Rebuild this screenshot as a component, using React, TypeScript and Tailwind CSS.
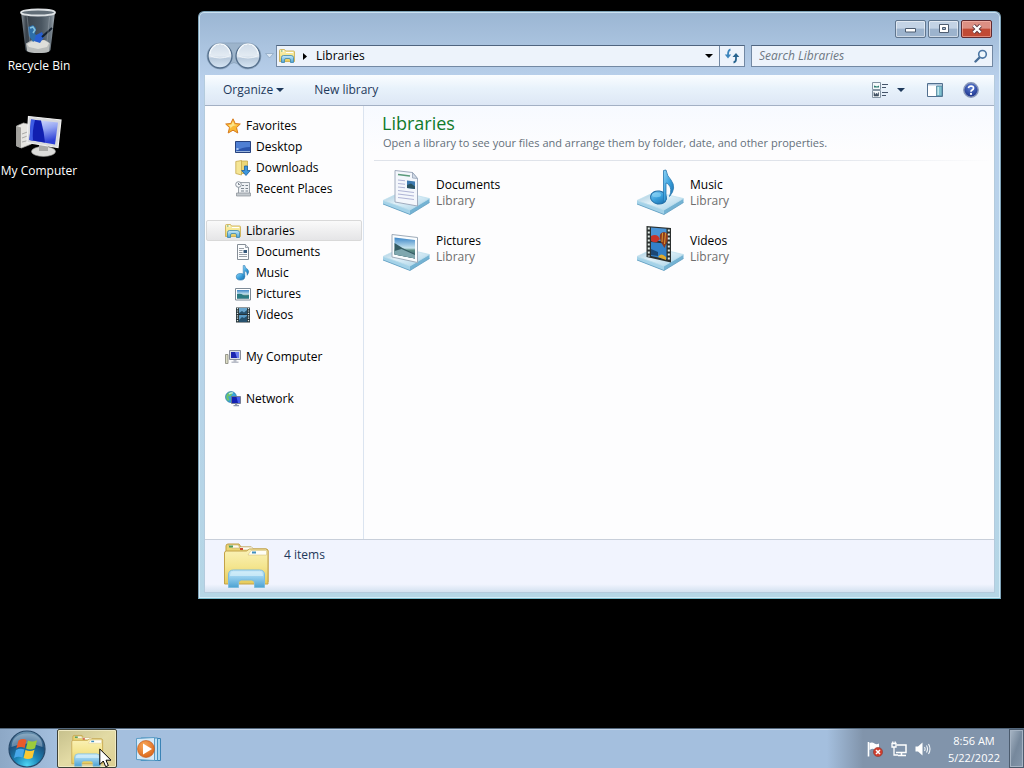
import type { ReactNode } from "react";

interface NavItem {
  label: string;
  icon: ReactNode;
}

interface NavGroup {
  title: string;
  icon: ReactNode;
  selected?: boolean;
  items: NavItem[];
}

// Gradients shared by the icons below
function IconDefs() {
  return (
    <svg className="absolute h-0 w-0" aria-hidden="true">
      <defs>
        <linearGradient id="folder" x1="0" y1="0" x2="0" y2="1">
          <stop offset="0" stopColor="#faf2b8" />
          <stop offset="0.5" stopColor="#f4e58f" />
          <stop offset="1" stopColor="#e6ca5c" />
        </linearGradient>
        <linearGradient id="stand" x1="0" y1="0" x2="0" y2="1">
          <stop offset="0" stopColor="#c9eafa" />
          <stop offset="0.45" stopColor="#8fcbec" />
          <stop offset="1" stopColor="#4da2d2" />
        </linearGradient>
        <linearGradient id="trayTop" x1="0" y1="0" x2="1" y2="1">
          <stop offset="0" stopColor="#9cc4d8" />
          <stop offset="0.45" stopColor="#e0f0f8" />
          <stop offset="1" stopColor="#a3d0e6" />
        </linearGradient>
        <linearGradient id="note" x1="0" y1="0" x2="1" y2="1">
          <stop offset="0" stopColor="#8ed4f7" />
          <stop offset="0.5" stopColor="#3aa0dc" />
          <stop offset="1" stopColor="#1568a8" />
        </linearGradient>
        <linearGradient id="sky" x1="0" y1="0" x2="0" y2="1">
          <stop offset="0" stopColor="#3c86c8" />
          <stop offset="0.5" stopColor="#c7e4ee" />
          <stop offset="0.6" stopColor="#5d8f86" />
          <stop offset="1" stopColor="#27556b" />
        </linearGradient>
        <linearGradient id="screen" x1="0" y1="0" x2="0.3" y2="1">
          <stop offset="0" stopColor="#e3e8ff" />
          <stop offset="0.5" stopColor="#93a4f2" />
          <stop offset="1" stopColor="#2c3fd6" />
        </linearGradient>
        <linearGradient id="bin" x1="0" y1="0" x2="1" y2="0">
          <stop offset="0" stopColor="#8b949b" />
          <stop offset="0.15" stopColor="#39424b" />
          <stop offset="0.6" stopColor="#4a5661" />
          <stop offset="0.88" stopColor="#6f7b85" />
          <stop offset="1" stopColor="#aab3ba" />
        </linearGradient>
        <linearGradient id="navBall" x1="0" y1="0" x2="0" y2="1">
          <stop offset="0" stopColor="#cfdbe8" />
          <stop offset="0.5" stopColor="#e3ebf3" />
          <stop offset="0.6" stopColor="#b9cadc" />
          <stop offset="1" stopColor="#d8e7f5" />
        </linearGradient>
        <radialGradient id="orb" cx="0.5" cy="0.95" r="0.95">
          <stop offset="0" stopColor="#4fd6f4" />
          <stop offset="0.35" stopColor="#1c86b8" />
          <stop offset="0.7" stopColor="#1c4f7c" />
          <stop offset="1" stopColor="#6f97b4" />
        </radialGradient>
        <radialGradient id="play" cx="0.4" cy="0.3" r="0.8">
          <stop offset="0" stopColor="#f8a95b" />
          <stop offset="1" stopColor="#d85f12" />
        </radialGradient>
        <radialGradient id="helpBall" cx="0.5" cy="0.3" r="0.7">
          <stop offset="0" stopColor="#5c80d6" />
          <stop offset="1" stopColor="#1a2f88" />
        </radialGradient>
      </defs>
    </svg>
  );
}

function LibrariesSmallIcon() {
  return (
    <svg className="h-4 w-4 shrink-0" viewBox="0 0 16 16">
      <path d="M.5 13.500V2.500q0-1 1-1h4l1 1.500h8q1 0 1 1v9.500z" fill="url(#folder)" stroke="#c9a94a" strokeWidth=".8" />
      <path d="M2 3h3M7 4.500h7" stroke="#fff" strokeWidth="1" />
      <path d="M2 3h1.500" stroke="#4f9c53" strokeWidth="1.200" />
      <path d="M2.500 14.500V9.500q0-2 2-2h7.500q2.500 0 2.500 2v5h-3v-2.500q0-1.500-1.500-1.500H7q-1.500 0-1.500 1.500v2.500z" fill="url(#stand)" stroke="#3c86ae" strokeWidth=".8" />
    </svg>
  );
}

function LibrariesLargeIcon({ className }: { className: string }) {
  return (
    <svg className={className} viewBox="0 0 48 48">
      <path d="M4 40V4q0-2 2-2h11l2 3h10l2 2h13q2 0 2 2v31z" fill="#ead472" stroke="#bf9f45" />
      <path d="M6 3h10l2 3h-8zM17 5h13l2 3H19z" fill="#fdfbef" stroke="#c5b077" strokeWidth=".6" />
      <path d="M7 4.500h4" stroke="#4d9d57" strokeWidth="2" />
      <path d="M18 7h3" stroke="#cf4630" strokeWidth="2" />
      <path d="M2.500 42V11q0-2 2-2h20l3-2h16q2.500 0 2.500 2v33z" fill="url(#folder)" stroke="#c3a248" />
      <path d="M29 8.500h15.500v4.500H26z" fill="#fffef5" stroke="#cdb976" strokeWidth=".5" />
      <path d="M30 10.500h4" stroke="#3f8fc0" strokeWidth="2" />
      <path d="M6.500 45.500V33q0-5 5-5h26q5 0 5 5v12.500h-10V41q0-3-3-3h-10q-3 0-3 3v4.500z" fill="url(#stand)" stroke="#7cbcdf" />
      <path d="M8 34q0-4.500 4-4.500h25q4 0 4 4.500z" fill="#d6effa" opacity=".7" />
    </svg>
  );
}

function StarIcon() {
  return (
    <svg className="h-4 w-4 shrink-0" viewBox="0 0 16 16">
      <path d="M8 .8 10.200 5.500 15.300 6 11.500 9.600 12.800 15 8 12.200 3.200 15 4.500 9.600.700 6 5.800 5.500z" fill="#f9b934" stroke="#d77a1d" strokeWidth="1" strokeLinejoin="round" />
      <path d="M8 3 9.300 6.500 12.500 7 8 8 4.500 11 5.500 9 3.300 7 6.500 6.500z" fill="#fde58a" />
    </svg>
  );
}

function DesktopSmallIcon() {
  return (
    <svg className="h-4 w-4 shrink-0" viewBox="0 0 16 16">
      <path d="M.5 2.500h15v11H.5z" fill="#2b55ad" stroke="#27427f" />
      <path d="M1 3h14v5Q7 8 1 12z" fill="#4f7fd3" />
      <path d="M1 12.500h14" stroke="#9ab5dc" />
      <path d="M1.500 9h2v2h-2z" fill="#a8c6f2" />
    </svg>
  );
}

function DownloadsIcon() {
  return (
    <svg className="h-4 w-4 shrink-0" viewBox="0 0 16 16">
      <path d="M6 1h6.500v12.500H6z" fill="#ecd676" stroke="#c7a94b" strokeWidth=".8" />
      <path d="M.8 1.500 6.500.5v14.500l-5.700-1.500z" fill="#f5e595" stroke="#c7a94b" strokeWidth=".8" />
      <path d="M9.500 6h3v4.500h2.800L11 15.500l-4.300-5h2.800z" fill="#3d96dc" stroke="#1b5fa3" strokeWidth=".8" />
    </svg>
  );
}

function RecentIcon() {
  return (
    <svg className="h-4 w-4 shrink-0" viewBox="0 0 16 16">
      <path d="M3.500 1.500h11v13h-11z" fill="#eef1f4" stroke="#9ba3aa" />
      <path d="M1.500 12h14v3h-14z" fill="#c3c9ce" stroke="#868e95" strokeWidth=".7" />
      <path d="M7 4.500h2M10.500 4.500h2.500M6 7.500h3M10.500 7.500h2.500M6 10h3M10.500 10h2.500" stroke="#7b858f" />
      <circle cx="3.500" cy="3.500" r="2.800" fill="#f7f9fb" stroke="#8a939d" />
      <path d="M3.500 2v1.500h1.300" stroke="#54606d" strokeWidth=".8" fill="none" />
    </svg>
  );
}

function DocumentSmallIcon() {
  return (
    <svg className="h-4 w-4 shrink-0" viewBox="0 0 16 16">
      <path d="M2.500.5h8l3 3v12h-11z" fill="#fcfdfe" stroke="#858d96" />
      <path d="M10.500.5v3h3" fill="#dde2e8" stroke="#858d96" strokeWidth=".8" />
      <path d="M4 4.500h5M4 6.500h3.500M4 8.500h3.500M4 10.500h8M4 12.500h8" stroke="#8e959e" strokeWidth=".9" />
      <path d="M8.500 6h3.500v3H8.500z" fill="#37597c" />
    </svg>
  );
}

function MusicSmallIcon() {
  return (
    <svg className="h-4 w-4 shrink-0" viewBox="0 0 16 16">
      <ellipse cx="5.500" cy="11.800" rx="4.200" ry="3.300" fill="url(#note)" stroke="#2471a8" strokeWidth=".6" />
      <path d="M8.200.5h1.600q.3 2.500 2.800 3.800 2.400 2.200-.4 6 .3-3.500-2.400-4.600v6H8.200z" fill="url(#note)" stroke="#2471a8" strokeWidth=".5" />
    </svg>
  );
}

function PictureSmallIcon() {
  return (
    <svg className="h-4 w-4 shrink-0" viewBox="0 0 16 16">
      <path d="M.5 2.500h15v11.500H.5z" fill="#fff" stroke="#7d8a96" />
      <path d="M2 4h12v8.500H2z" fill="url(#sky)" />
      <path d="M2 8q4-1 6 1t6 0v3.500H2z" fill="#2b7c83" />
    </svg>
  );
}

function VideoSmallIcon() {
  return (
    <svg className="h-4 w-4 shrink-0" viewBox="0 0 16 16">
      <path d="M1 .5h14v15H1z" fill="#253238" />
      <path d="M4 1h8v6H4z" fill="#6aa7cf" />
      <path d="M4 8h8v7H4z" fill="#5a9cc8" />
      <path d="m4 6 3-2 2 1.500L12 3v4H4zM4 13l3-3 2 1 3-2v6H4z" fill="#26516e" />
      <path d="M2.500 1v14M13.500 1v14" stroke="#dfe9e6" strokeWidth="1.300" strokeDasharray="1.200 1.200" />
    </svg>
  );
}

function ComputerSmallIcon() {
  return (
    <svg className="h-4 w-4 shrink-0" viewBox="0 0 16 16">
      <path d="M.5 5.500h2.500v9H.5z" fill="#dcdcc4" stroke="#85857a" strokeWidth=".8" />
      <path d="M4.500 1.500h11v9h-11z" fill="#d9dde6" stroke="#8a8f9c" />
      <path d="M6 3h8v6H6z" fill="#1c25b0" />
      <path d="M10 3h4v6h-2z" fill="#6a7cf0" />
      <path d="M8.500 11h3v1.500h2V14h-7v-1.500h2z" fill="#b9bdc8" />
    </svg>
  );
}

function NetworkIcon() {
  return (
    <svg className="h-4 w-4 shrink-0" viewBox="0 0 16 16">
      <circle cx="6" cy="6" r="5.500" fill="#3aa5d8" stroke="#1f6f9c" strokeWidth=".6" />
      <path d="M2 3q3-3 6-1.500L6 5 3 5.500 4.500 9 3 10Q0 7 2 3z" fill="#6fc46a" />
      <path d="M4 3q2-1.500 4-1" stroke="#c8eff8" strokeWidth="1.200" fill="none" />
      <path d="M6.500 5.500h9v7h-9z" fill="#d5dbea" stroke="#59627f" strokeWidth=".8" />
      <path d="M7 6h8v6H7z" fill="#1420b4" />
      <path d="M11.500 6H15v6h-2z" fill="#4a60ec" />
      <path d="M10 12.500h2.200V14H14v1.300H8.500V14H10z" fill="#8d96ad" />
    </svg>
  );
}

// Glass tray that every library icon stands on
function Tray() {
  return (
    <g>
      <path d="M1 31.500V35l27 10.500 19.500-12V29.500z" fill="#74b3d3" />
      <path d="M1 31.500V35l27 10.500V41z" fill="#a4d2e8" />
      <path d="M1 31.500 19 23l28.500 6.500L28 41z" fill="url(#trayTop)" stroke="#bfe0ee" strokeWidth=".8" />
      <path d="M1 35l27 10.500 19.500-12" fill="none" stroke="#5f9dc0" strokeWidth=".8" />
    </g>
  );
}

function DocumentsLibraryIcon() {
  return (
    <svg className="h-12 w-12 shrink-0" viewBox="0 0 48 48">
      <Tray />
      <path d="M13 1.500 30.500 3.500l5 6v27.500L13 33z" fill="#f4f7fc" stroke="#a1acbe" />
      <path d="M30.500 3.500v5.500l5 .500z" fill="#d3dce8" stroke="#8d9bb0" strokeWidth=".7" />
      <path d="M16 5.500 28 7" stroke="#5a9a7a" strokeWidth="1.600" />
      <path d="m16 11 7 .8M16 14.500l7 .8M16 18l7 .8M16 21.500l16 2M16 25l16 2M16 28.500l16 2" stroke="#b0b5d6" strokeWidth="1.100" />
      <path d="m25 11.500 8 1v7.500l-8-1z" fill="#3d7ab0" />
      <path d="m25 16 4-1.500 4 3V20l-8-1z" fill="#2b5361" />
    </svg>
  );
}

function MusicLibraryIcon() {
  return (
    <svg className="h-12 w-12 shrink-0" viewBox="0 0 48 48">
      <Tray />
      <ellipse cx="22.500" cy="28.500" rx="8" ry="6.500" fill="url(#note)" stroke="#1d6ca6" transform="rotate(10 22.500 28.500)" />
      <path d="M27.500 1.500 30 1q1 6 5 10 6 8-1.500 16.500 3-8-1-12-1.500-1.500-2.500-1.500v17l-2.500 2z" fill="url(#note)" stroke="#2676af" strokeWidth=".8" />
      <ellipse cx="20.500" cy="26" rx="4.500" ry="2.200" fill="#93dbfa" opacity=".55" />
    </svg>
  );
}

function PicturesLibraryIcon() {
  return (
    <svg className="h-12 w-12 shrink-0" viewBox="0 0 48 48">
      <Tray />
      <path d="M10 9.500 35.500 12.500v25L10 32z" fill="#fbfdfe" stroke="#9eabb9" />
      <path d="M12.500 12.500 33 15v18.500l-20.500-4z" fill="url(#sky)" />
      <path d="m12.500 18 8 5 12.500 6v4.500l-20.500-4z" fill="#355c63" />
      <path d="m12.500 26 7-2 13.500 6v3.500l-20.500-4z" fill="#7fa7ae" />
    </svg>
  );
}

function VideosLibraryIcon() {
  return (
    <svg className="h-12 w-12 shrink-0" viewBox="0 0 48 48">
      <Tray />
      <path d="M10.500 1 35 3v34.500L10.500 32z" fill="#2b302f" />
      <path d="m15 2.500 15.500 1.200v13L15 15z" fill="#4a94d6" />
      <path d="m15 17 15.500 1.800v15.500L15 31z" fill="#3280c8" />
      <path d="M15 11q4-2 7 0l2 3-3 3q-3 1-6-1z" fill="#c63228" />
      <path d="M28 7q5 1 4 7l-3.500 9-3-5Q21 8 28 7z" fill="#8e3a1d" />
      <path d="m26.500 8-.5 9M29.500 8l-1 11" stroke="#dc9a30" />
      <path d="M22 32q3-5 8 0v3z" fill="#e0a92c" />
      <path d="m15 24 7 3v4l-7-1z" fill="#1b4774" />
      <path d="M12.800 2.500v29M32.800 4.500v32" stroke="#e4eeea" strokeWidth="2" strokeDasharray="2 2" />
    </svg>
  );
}

function RecycleBinIcon() {
  return (
    <svg className="h-12 w-12" viewBox="0 0 48 48">
      <path d="M6 4h34l-4.500 38q-.5 3-12.500 3T10.500 42z" fill="url(#bin)" />
      <path d="m11 35.500 5-3 7-1 8 1 4 3-1 8q-3 1.500-11 1.500T12 43z" fill="#b9bcbb" />
      <path d="m12 36 6-3 5 1 6-2 5 3-2 4-9 2-9-2z" fill="#dededa" />
      <path d="m13 19 5-2 3 3-1 6 4 3-6 5-4-6z" fill="#2d6ea8" />
      <path d="m21 27 6-3 2 5-4 6-6-2z" fill="#285fd0" />
      <path d="M37 20 27 29" stroke="#14202f" strokeWidth="2" />
      <path d="m15 20 3-1 2 3-2 3" stroke="#86c3dd" strokeWidth="1.500" fill="none" />
      <path d="M12 8 15 34M34.500 9 32 34" stroke="#a9b2ba" strokeWidth=".8" opacity=".5" />
      <ellipse cx="23" cy="4.500" rx="17" ry="3" fill="#626e78" stroke="#dde1e4" strokeWidth="1.800" />
    </svg>
  );
}

function MyComputerIcon() {
  return (
    <svg className="h-12 w-12" viewBox="0 0 48 48">
      <path d="m1.500 13 7-3 8 2v19l-10 4-5-2z" fill="#e6e5e1" stroke="#a6a6a3" strokeWidth=".7" />
      <path d="M1.500 13 6 14.500V35l-4.500-2z" fill="#a3a29e" />
      <path d="M2.500 15.500v3M7 21l8-3M7 25l8-3M7 29l8-2" stroke="#9b9b98" strokeWidth=".8" />
      <ellipse cx="28.500" cy="38.500" rx="12" ry="5" fill="#dcdcda" stroke="#8e8e8c" strokeWidth=".6" />
      <path d="m24 31 9 2v5h-9z" fill="#a9a9a7" />
      <path d="M13.500 3.500 46 7l-3 27.500L12 29.500z" fill="#d7d9dd" stroke="#f2f2f2" strokeWidth="1.200" />
      <path d="m16 6.500 27 3-3 22L14.500 27z" fill="url(#screen)" />
      <path d="m16 6.500 10 1.100q3 11 4 22l-15.500-2.600z" fill="#101fb0" />
      <path d="m16 6.500 4 .5Q17 18 18 27.500L14.500 27z" fill="#3d5ce4" />
    </svg>
  );
}

function NavButtonsArt() {
  return (
    <svg className="h-[28px] w-[56px]" viewBox="0 0 56 28">
      <path d="M14 1h28a13 13 0 0 1 0 26q-7 0-10-5-4-3-8 0-3 5-10 5A13 13 0 0 1 14 1z" fill="#9db4cb" stroke="#8aa2bb" strokeWidth=".8" />
      <circle cx="14" cy="14" r="12" fill="url(#navBall)" stroke="#536e8c" strokeWidth="1.300" />
      <circle cx="42" cy="14" r="12" fill="url(#navBall)" stroke="#536e8c" strokeWidth="1.300" />
      <path d="M4 12a10 10 0 0 1 20 0M32 12a10 10 0 0 1 20 0" fill="none" stroke="#f2f7fb" strokeWidth="1.300" />
      <path d="M4.500 14q9.500 4 19 0M32.500 14q9.500 4 19 0" fill="none" stroke="#eef3f8" />
    </svg>
  );
}

function DownArrow({ className }: { className: string }) {
  return (
    <svg className={className} viewBox="0 0 8 4">
      <path d="M0 0h8L4 4z" fill="currentColor" />
    </svg>
  );
}

function RefreshIcon() {
  return (
    <svg className="h-4 w-4" viewBox="0 0 16 16">
      <path d="M6.500 1.500Q4 2 4 7" fill="none" stroke="#3d86bd" strokeWidth="1.800" />
      <path d="M.8 6.500h6.400L4 10.500z" fill="#3d86bd" />
      <path d="M12 8v3q0 3-2.500 3.500" fill="none" stroke="#27648f" strokeWidth="1.800" />
      <path d="M8.500 9h6.800L12 5z" fill="#27648f" />
    </svg>
  );
}

function SearchIcon() {
  return (
    <svg className="h-[14px] w-[14px]" viewBox="0 0 14 14">
      <path d="M6 8 1.500 12.500" stroke="#476d97" strokeWidth="2.400" strokeLinecap="round" />
      <circle cx="8.500" cy="5.300" r="3.800" fill="#eef6fc" stroke="#4c76a4" strokeWidth="1.600" />
    </svg>
  );
}

function ViewIcon() {
  return (
    <svg className="h-4 w-4" viewBox="0 0 16 16">
      <path d="M.5.5h8v7h-8zM.5 8.500h8v7h-8z" fill="#f5f9fb" stroke="#8494a3" />
      <path d="M2 5.500h5v-2L5 4.500 2 3.500z" fill="#2e7d70" />
      <path d="M2 10.500 3.500 13l1-2 1.500 2 .5-2.500V14H2z" fill="#415063" stroke="#415063" strokeWidth=".6" />
      <path d="M10 2.500h6M10 5.500h4M10 10.500h6M10 13.500h4" stroke="#44546a" />
    </svg>
  );
}

function PreviewPaneIcon() {
  return (
    <svg className="h-4 w-4" viewBox="0 0 16 16">
      <path d="M.5 1.500h15v13H.5z" fill="#fff" stroke="#52708f" />
      <path d="M1 2h14v1.500H1z" fill="#b5c8dc" />
      <path d="M9.500 4h5.500v10H9.500z" fill="#7fc0cf" stroke="#52839c" strokeWidth=".8" />
      <path d="M10.500 5h1.500v8h-1.500z" fill="#c6e7ec" />
    </svg>
  );
}

function HelpIcon() {
  return (
    <svg className="h-4 w-4" viewBox="0 0 16 16">
      <circle cx="8" cy="8" r="7.200" fill="url(#helpBall)" stroke="#8796b8" strokeWidth="1.400" />
      <path d="M5.500 6.200Q5.700 4 8.100 4q2.500.1 2.400 2.100-.1 1.300-1.300 1.900Q8 8.700 8 9.800" fill="none" stroke="#fff" strokeWidth="1.700" />
      <circle cx="8" cy="11.900" r="1.100" fill="#fff" />
    </svg>
  );
}

function StartOrb() {
  return (
    <svg className="h-[38px] w-[38px]" viewBox="0 0 38 38">
      <circle cx="19" cy="19" r="18" fill="url(#orb)" stroke="#27496a" strokeWidth="1.200" />
      <path d="M3.500 17Q4 4 19 3.500T34.500 17Q19 10 3.500 17z" fill="#d9e8f1" opacity=".38" />
      <path d="M10.500 10.500q4.500-2.500 8-.5l-1.900 8q-4-2-8.300.5z" fill="#ea5a2a" />
      <path d="M20 10.500q4.500 2 9-.3l-2 8q-4.500 2.300-9 .2z" fill="#9ccb3b" />
      <path d="M8 20q4.500-2.400 8.300-.4l-1.900 8q-4-2-8.400.4z" fill="#48a8ea" />
      <path d="M17.500 20q4.500 2.100 9-.2l-2 8q-4.500 2.300-8.900.2z" fill="#fbc933" />
    </svg>
  );
}

function MediaPlayerIcon() {
  return (
    <svg className="h-7 w-7" viewBox="0 0 28 28">
      <path d="M10 3.500h15.500v22H10z" fill="#a9d6ef" stroke="#3b83b5" />
      <path d="M6 3h16.500v22.500H6z" fill="#bfe0f4" stroke="#4690bf" />
      <path d="M1.500 3.500 19.500 2.500v23L1.500 24.500z" fill="#d6e9f6" stroke="#5c9dc6" />
      <circle cx="11" cy="14" r="8.500" fill="url(#play)" stroke="#c0551a" strokeWidth=".6" />
      <path d="m8 8.500 9 5.500-9 5.500z" fill="#fff" />
    </svg>
  );
}

function FlagIcon() {
  return (
    <svg className="h-4 w-4" viewBox="0 0 16 16">
      <path d="M1.500 1v14.500" stroke="#fff" strokeWidth="1.600" />
      <path d="M2.500 2q3-1 5 .5t4.500 0v6.500q-3 1-4.500-.5T2.500 9z" fill="#fff" />
      <circle cx="11" cy="11" r="4.600" fill="#cf3d2d" stroke="#8d3a34" strokeWidth=".6" />
      <path d="m9 9 4 4M13 9l-4 4" stroke="#fff" strokeWidth="1.500" />
    </svg>
  );
}

function NetworkTrayIcon() {
  return (
    <svg className="h-4 w-4" viewBox="0 0 16 16">
      <path d="M5.500 4h9.500v7.500H5M7 14.500h8M10.500 11.500v3" fill="none" stroke="#fff" strokeWidth="1.500" />
      <path d="M1 2.500h4v3.500H1zM1.800.5v2M4.200.5v2M3 6v8h4" fill="none" stroke="#fff" strokeWidth="1.300" />
    </svg>
  );
}

function VolumeIcon() {
  return (
    <svg className="h-4 w-4" viewBox="0 0 16 16">
      <path d="M.5 5.500H3L7.500 1.500v13L3 10.500H.5z" fill="#fff" />
      <path d="M9.500 6q1.200 2 0 4M11.500 4.500q2 3.500 0 7M13.500 3q3 5 0 10" fill="none" stroke="#f3f7fa" strokeWidth="1.100" />
    </svg>
  );
}

const navGroups: NavGroup[] = [
  {
    title: "Favorites",
    icon: <StarIcon />,
    items: [
      { label: "Desktop", icon: <DesktopSmallIcon /> },
      { label: "Downloads", icon: <DownloadsIcon /> },
      { label: "Recent Places", icon: <RecentIcon /> },
    ],
  },
  {
    title: "Libraries",
    icon: <LibrariesSmallIcon />,
    selected: true,
    items: [
      { label: "Documents", icon: <DocumentSmallIcon /> },
      { label: "Music", icon: <MusicSmallIcon /> },
      { label: "Pictures", icon: <PictureSmallIcon /> },
      { label: "Videos", icon: <VideoSmallIcon /> },
    ],
  },
  { title: "My Computer", icon: <ComputerSmallIcon />, items: [] },
  { title: "Network", icon: <NetworkIcon />, items: [] },
];

const libraries: NavItem[] = [
  { label: "Documents", icon: <DocumentsLibraryIcon /> },
  { label: "Music", icon: <MusicLibraryIcon /> },
  { label: "Pictures", icon: <PicturesLibraryIcon /> },
  { label: "Videos", icon: <VideosLibraryIcon /> },
];

const captionButton =
  "flex h-[18px] w-[31px] items-center justify-center rounded-[2px] border border-[#60768f] bg-linear-to-b from-[#c3d3e5] from-45% to-[#9cb3cd] to-50% shadow-[inset_0_0_0_1px_rgba(255,255,255,0.5)]";

function TitleBar() {
  return (
    <div className="flex justify-end gap-[2px] px-[3px] pt-[8px]">
      <button type="button" aria-label="Minimize" className={captionButton}>
        <svg className="h-[12px] w-[14px]" viewBox="0 0 14 12">
          <path d="M1.500 5.500h10v3.500h-10z" fill="#fff" stroke="#4d5c70" />
        </svg>
      </button>
      <button type="button" aria-label="Maximize" className={captionButton}>
        <svg className="h-[12px] w-[14px]" viewBox="0 0 14 12">
          <path d="M2.500 1.500h9v8h-9z" fill="#fff" stroke="#4d5c70" />
          <path d="M5.500 4.500h3v2h-3z" fill="#a9bcd2" stroke="#4d5c70" />
        </svg>
      </button>
      <button
        type="button"
        aria-label="Close"
        className="flex h-[18px] w-[31px] items-center justify-center rounded-[2px] border border-[#5f2a30] bg-linear-to-b from-[#dc8f83] from-45% to-[#c04a35] to-50% shadow-[inset_0_0_0_1px_rgba(255,200,190,0.5)]"
      >
        <svg className="h-[12px] w-[14px]" viewBox="0 0 14 12">
          <path d="m3.500 2.500 7 7M10.500 2.500l-7 7" stroke="#5c3840" strokeWidth="4" />
          <path d="m3.500 2.500 7 7M10.500 2.500l-7 7" stroke="#fff" strokeWidth="2.400" />
        </svg>
      </button>
    </div>
  );
}

function AddressRow() {
  return (
    <div className="flex items-center py-[4px] px-[2px]">
      <div className="relative h-[28px] w-[56px] shrink-0">
        <NavButtonsArt />
        <div className="absolute inset-0 flex">
          <button type="button" aria-label="Back" className="flex-1 rounded-full" />
          <button type="button" aria-label="Forward" className="flex-1 rounded-full" />
        </div>
      </div>
      <button type="button" aria-label="Recent pages" className="flex w-[14px] shrink-0 justify-center">
        <svg className="h-[6px] w-[9px]" viewBox="0 0 9 6">
          <path d="M.5.5h8l-4 4.500z" fill="#dce8f4" stroke="#8fa8c4" strokeWidth=".8" />
        </svg>
      </button>
      <div className="flex h-[22px] min-w-0 flex-1 items-center border border-[#7288a3] border-t-[#4f647f] bg-[#edf3fb]">
        <span className="ml-[2px]">
          <LibrariesSmallIcon />
        </span>
        <svg className="ml-[8px] h-[7px] w-[4px]" viewBox="0 0 4 7">
          <path d="M0 0v7l4-3.500z" fill="#000" />
        </svg>
        <button type="button" className="ml-[9px] text-black">
          Libraries
        </button>
        <button type="button" aria-label="Previous locations" className="mr-[6px] ml-auto text-black">
          <DownArrow className="h-[4px] w-[8px]" />
        </button>
        <button
          type="button"
          aria-label="Refresh"
          className="flex h-full w-[25px] items-center justify-center border-l border-[#7288a3]"
        >
          <RefreshIcon />
        </button>
      </div>
      <form className="ml-[6px] flex h-[22px] w-[242px] items-center border border-[#7288a3] border-t-[#4f647f] bg-[#edf3fb] pr-[4px] pl-[7px]">
        <input
          type="search"
          aria-label="Search Libraries"
          placeholder="Search Libraries"
          className="min-w-0 flex-1 bg-transparent outline-none placeholder:text-[#6d7782] placeholder:italic"
        />
        <button type="submit" aria-label="Search">
          <SearchIcon />
        </button>
      </form>
    </div>
  );
}

function Toolbar() {
  return (
    <div className="flex h-[31px] items-center border-b border-[#a3b0c4] bg-linear-to-b from-[#fafdff] via-[#e8f2fb] via-45% to-[#dde7f5] pr-[15px] pl-[18px] text-[#1e395b]">
      <button type="button" className="flex items-center gap-[3px]">
        Organize
        <DownArrow className="h-[4px] w-[8px]" />
      </button>
      <button type="button" className="ml-[30px]">
        New library
      </button>
      <button type="button" aria-label="Change your view" className="ml-auto flex items-center gap-[9px]">
        <ViewIcon />
        <DownArrow className="h-[4px] w-[8px]" />
      </button>
      <button type="button" aria-label="Show the preview pane" className="ml-[22px]">
        <PreviewPaneIcon />
      </button>
      <button type="button" aria-label="Get help" className="ml-[20px]">
        <HelpIcon />
      </button>
    </div>
  );
}

function NavigationPane() {
  return (
    <nav className="flex w-[159px] shrink-0 flex-col gap-[21px] border-r border-[#dbe4f0] px-[1px] pt-[9px]">
      {navGroups.map((group) => (
        <div key={group.title}>
          <a
            href="#"
            className={
              group.selected
                ? "flex h-[21px] items-center gap-[5px] rounded-[2px] border border-[#d9d9d9] bg-linear-to-b from-[#fafafa] to-[#e5e5e7] pl-[18px]"
                : "flex h-[21px] items-center gap-[5px] pl-[19px]"
            }
          >
            {group.icon}
            {group.title}
          </a>
          {group.items.map((item) => (
            <a key={item.label} href="#" className="flex h-[21px] items-center gap-[5px] pl-[29px]">
              {item.icon}
              {item.label}
            </a>
          ))}
        </div>
      ))}
    </nav>
  );
}

function LibraryPane() {
  return (
    <main className="min-w-0 flex-1">
      <header className="bg-linear-to-b from-[#f7faff] to-[#fdfdfe] pt-[6px] pl-[18px]">
        <h1 className="text-[18px] leading-[22px] text-[#117a2b]">Libraries</h1>
        <p className="pl-[1px] text-[11px] leading-[18px] text-[#65707b]">
          Open a library to see your files and arrange them by folder, date, and other properties.
        </p>
      </header>
      <div className="mt-[8px] ml-[10px] h-px bg-linear-to-r from-[#dfe3ea] from-70% to-transparent" />
      <ul className="grid grid-cols-[repeat(auto-fill,254px)] gap-y-[8px] pt-[8px] pl-[18px]">
        {libraries.map((library) => (
          <li key={library.label}>
            <a href="#" className="flex items-center gap-[6px]">
              {library.icon}
              <span className="flex flex-col leading-[16px]">
                {library.label}
                <span className="text-[#6d6d6d]">Library</span>
              </span>
            </a>
          </li>
        ))}
      </ul>
    </main>
  );
}

function ExplorerWindow() {
  return (
    <section
      aria-label="Libraries"
      className="mt-[11px] mr-[23px] mb-[129px] ml-[120px] flex min-w-0 flex-1 flex-col rounded-t-[6px] border border-[#7fa3b8] border-b-[#79b9cb] bg-linear-to-b from-[#9bb6d3] via-[#bad1ec] via-[70px] to-[#b5d6e6] px-[5px] pb-[5px] shadow-[inset_0_0_0_1px_rgba(225,245,255,0.7)]"
    >
      <TitleBar />
      <AddressRow />
      <div className="mt-px flex flex-1 flex-col border border-t-0 border-[#b4cbdd] bg-[#fdfdfe]">
        <Toolbar />
        <div className="flex flex-1">
          <NavigationPane />
          <LibraryPane />
        </div>
        <footer className="flex h-[53px] items-start gap-[14px] border-t border-[#c8cfda] bg-linear-to-b from-[#f1f4fe] from-85% to-[#d3e1f0] pt-[2px] pl-[17px] text-[#1e395b]">
          <LibrariesLargeIcon className="h-12 w-12 shrink-0" />
          <span className="pt-[4px] leading-[18px]">4 items</span>
        </footer>
      </div>
    </section>
  );
}

function Taskbar() {
  return (
    <footer className="flex h-[40px] items-stretch border-t border-[#53677c] bg-[#a4bfde] shadow-[inset_0_1px_0_#c3d5ea]">
      <button type="button" aria-label="Start" className="flex w-[57px] items-center bg-linear-to-r from-[#8da8c6] to-[#a4bfde] pl-[8px]">
        <StartOrb />
      </button>
      <button
        type="button"
        aria-label="Windows Explorer"
        className="relative flex w-[60px] items-center justify-center rounded-[2px] border border-[#3c4038] bg-linear-to-br from-[#c6c08c] via-[#e3dba5] to-[#dccf92] shadow-[inset_0_0_0_1px_#f0eac2]"
      >
        <LibrariesLargeIcon className="mt-[4px] h-[34px] w-[34px]" />
        {/* mouse pointer */}
        <svg className="absolute top-[18px] left-[41px] h-[20px] w-[13px]" viewBox="0 0 13 20">
          <path d="M.8 1v15.500L4.300 13l2.400 5.700 2.600-1.100L7 12.200h5z" fill="#fff" stroke="#000" />
        </svg>
      </button>
      <button type="button" aria-label="Windows Media Player" className="ml-[18px] flex items-center">
        <MediaPlayerIcon />
      </button>
      <div className="ml-auto flex items-center bg-linear-to-r from-transparent to-[#8194ab] to-[36px] pl-[40px]">
        <div className="flex gap-[8px]">
          <button type="button" aria-label="Action Center">
            <FlagIcon />
          </button>
          <button type="button" aria-label="Network status">
            <NetworkTrayIcon />
          </button>
          <button type="button" aria-label="Volume">
            <VolumeIcon />
          </button>
        </div>
        <time dateTime="2022-05-22T08:56" className="ml-[16px] w-[54px] text-center text-[11px] leading-[17px] text-white">
          <span className="block whitespace-nowrap">8:56 AM</span>
          <span className="block whitespace-nowrap">5/22/2022</span>
        </time>
        <button
          type="button"
          aria-label="Show desktop"
          className="ml-[8px] h-full w-[15px] border border-[#4b5b6d] bg-linear-to-br from-[#a9b7c6] via-[#76889c] to-[#8496aa] shadow-[inset_0_0_0_1px_#a5b3c3]"
        />
      </div>
    </footer>
  );
}

export default function App() {
  return (
    <div className="flex min-h-screen flex-col bg-black font-['Open_Sans','Noto_Sans',sans-serif] text-[12px] leading-[16px] text-black">
      <IconDefs />
      <div className="flex flex-1">
        <div className="flex w-[78px] shrink-0 flex-col gap-[39px] pt-[8px] text-white">
          <a href="#" className="flex flex-col items-center gap-[2px]">
            <RecycleBinIcon />
            <span>Recycle Bin</span>
          </a>
          <a href="#" className="flex flex-col items-center gap-[2px]">
            <MyComputerIcon />
            <span className="whitespace-nowrap">My Computer</span>
          </a>
        </div>
        <ExplorerWindow />
      </div>
      <Taskbar />
    </div>
  );
}
